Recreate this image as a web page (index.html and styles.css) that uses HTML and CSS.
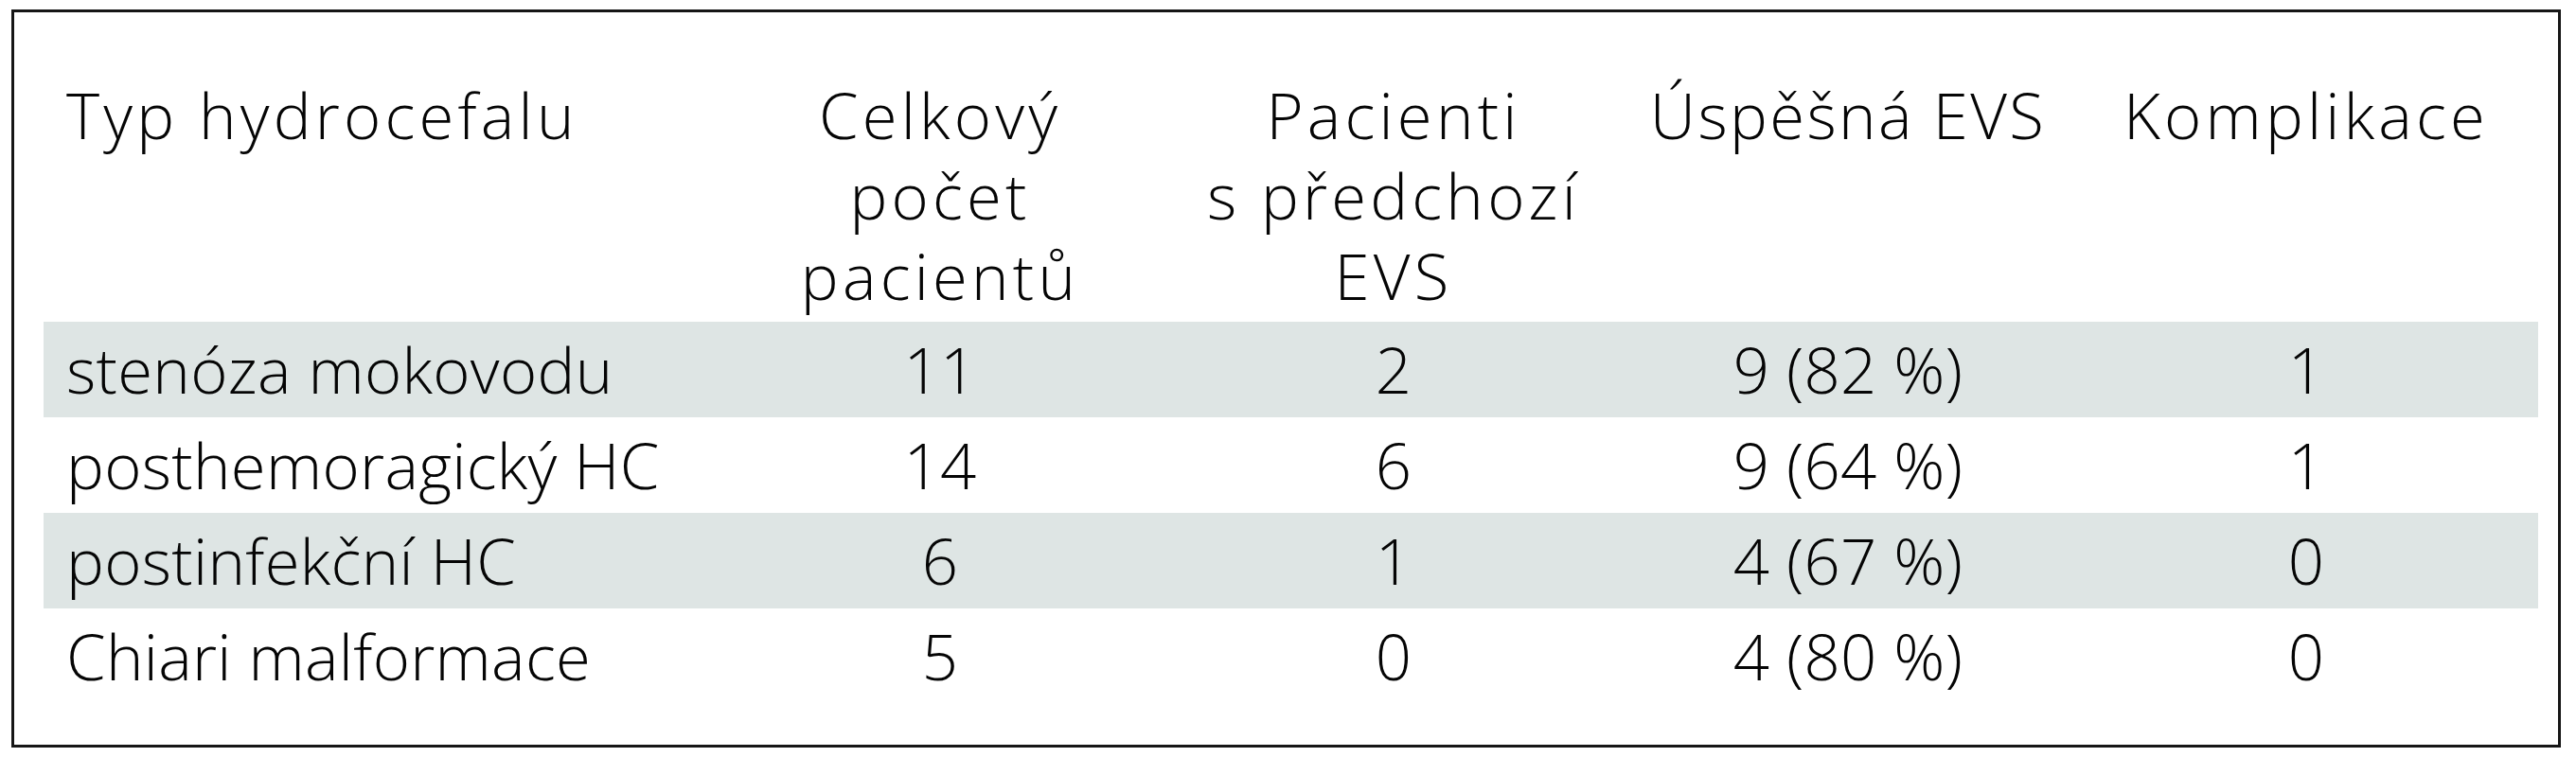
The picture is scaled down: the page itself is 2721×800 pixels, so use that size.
FILE: index.html
```html
<!DOCTYPE html>
<html lang="cs">
<head>
<meta charset="utf-8">
<title>Typ hydrocefalu</title>
<link rel="stylesheet" href="styles.css">
</head>
<body>
<div class="frame">
  <table class="data">
    <colgroup>
      <col class="c1"><col class="c2"><col class="c3"><col class="c4"><col class="c5">
    </colgroup>
    <thead>
      <tr>
        <th class="first">Typ hydrocefalu</th>
        <th>Celkový<br>počet<br>pacientů</th>
        <th>Pacienti<br>s předchozí<br>EVS</th>
        <th class="narrow">Úspěšná EVS</th>
        <th>Komplikace</th>
      </tr>
    </thead>
    <tbody>
      <tr class="shade">
        <td class="first">stenóza mokovodu</td><td>11</td><td>2</td><td>9 (82 %)</td><td>1</td>
      </tr>
      <tr>
        <td class="first">posthemoragický HC</td><td>14</td><td>6</td><td>9 (64 %)</td><td>1</td>
      </tr>
      <tr class="shade">
        <td class="first">postinfekční HC</td><td>6</td><td>1</td><td>4 (67 %)</td><td>0</td>
      </tr>
      <tr>
        <td class="first">Chiari malformace</td><td>5</td><td>0</td><td>4 (80 %)</td><td>0</td>
      </tr>
    </tbody>
  </table>
</div>
</body>
</html>
```

FILE: styles.css
```css
html, body {
  margin: 0;
  padding: 0;
  background: #ffffff;
}

body {
  font-family: "Open Sans", "Noto Sans", "Liberation Sans", sans-serif;
  color: #050505;
}

.frame {
  box-sizing: border-box;
  width: 2693px;
  height: 780px;
  margin: 10px 0 0 12px;
  border: 3px solid #161616;
  padding: 0 21px 0 31px;
}

.data {
  border-collapse: collapse;
  table-layout: fixed;
  width: 2635px;
  font-size: 67px;
  font-weight: 300;
}

.c1 { width: 709px; }
.c2 { width: 476px; }
.c3 { width: 482px; }
.c4 { width: 478px; }
.c5 { width: 490px; }

.data th {
  font-weight: 300;
  line-height: 85px;
  letter-spacing: 4.2px;
  vertical-align: top;
  text-align: center;
  padding: 66px 0 6px 0;
  white-space: nowrap;
}

.data th.narrow {
  letter-spacing: 2.4px;
}

.data td {
  height: 101px;
  padding: 0;
  line-height: 91px;
  letter-spacing: 0.3px;
  text-align: center;
  vertical-align: middle;
  white-space: nowrap;
}

.data .first {
  text-align: left;
  padding-left: 24px;
}

.shade td {
  background: #dee5e4;
}
```
